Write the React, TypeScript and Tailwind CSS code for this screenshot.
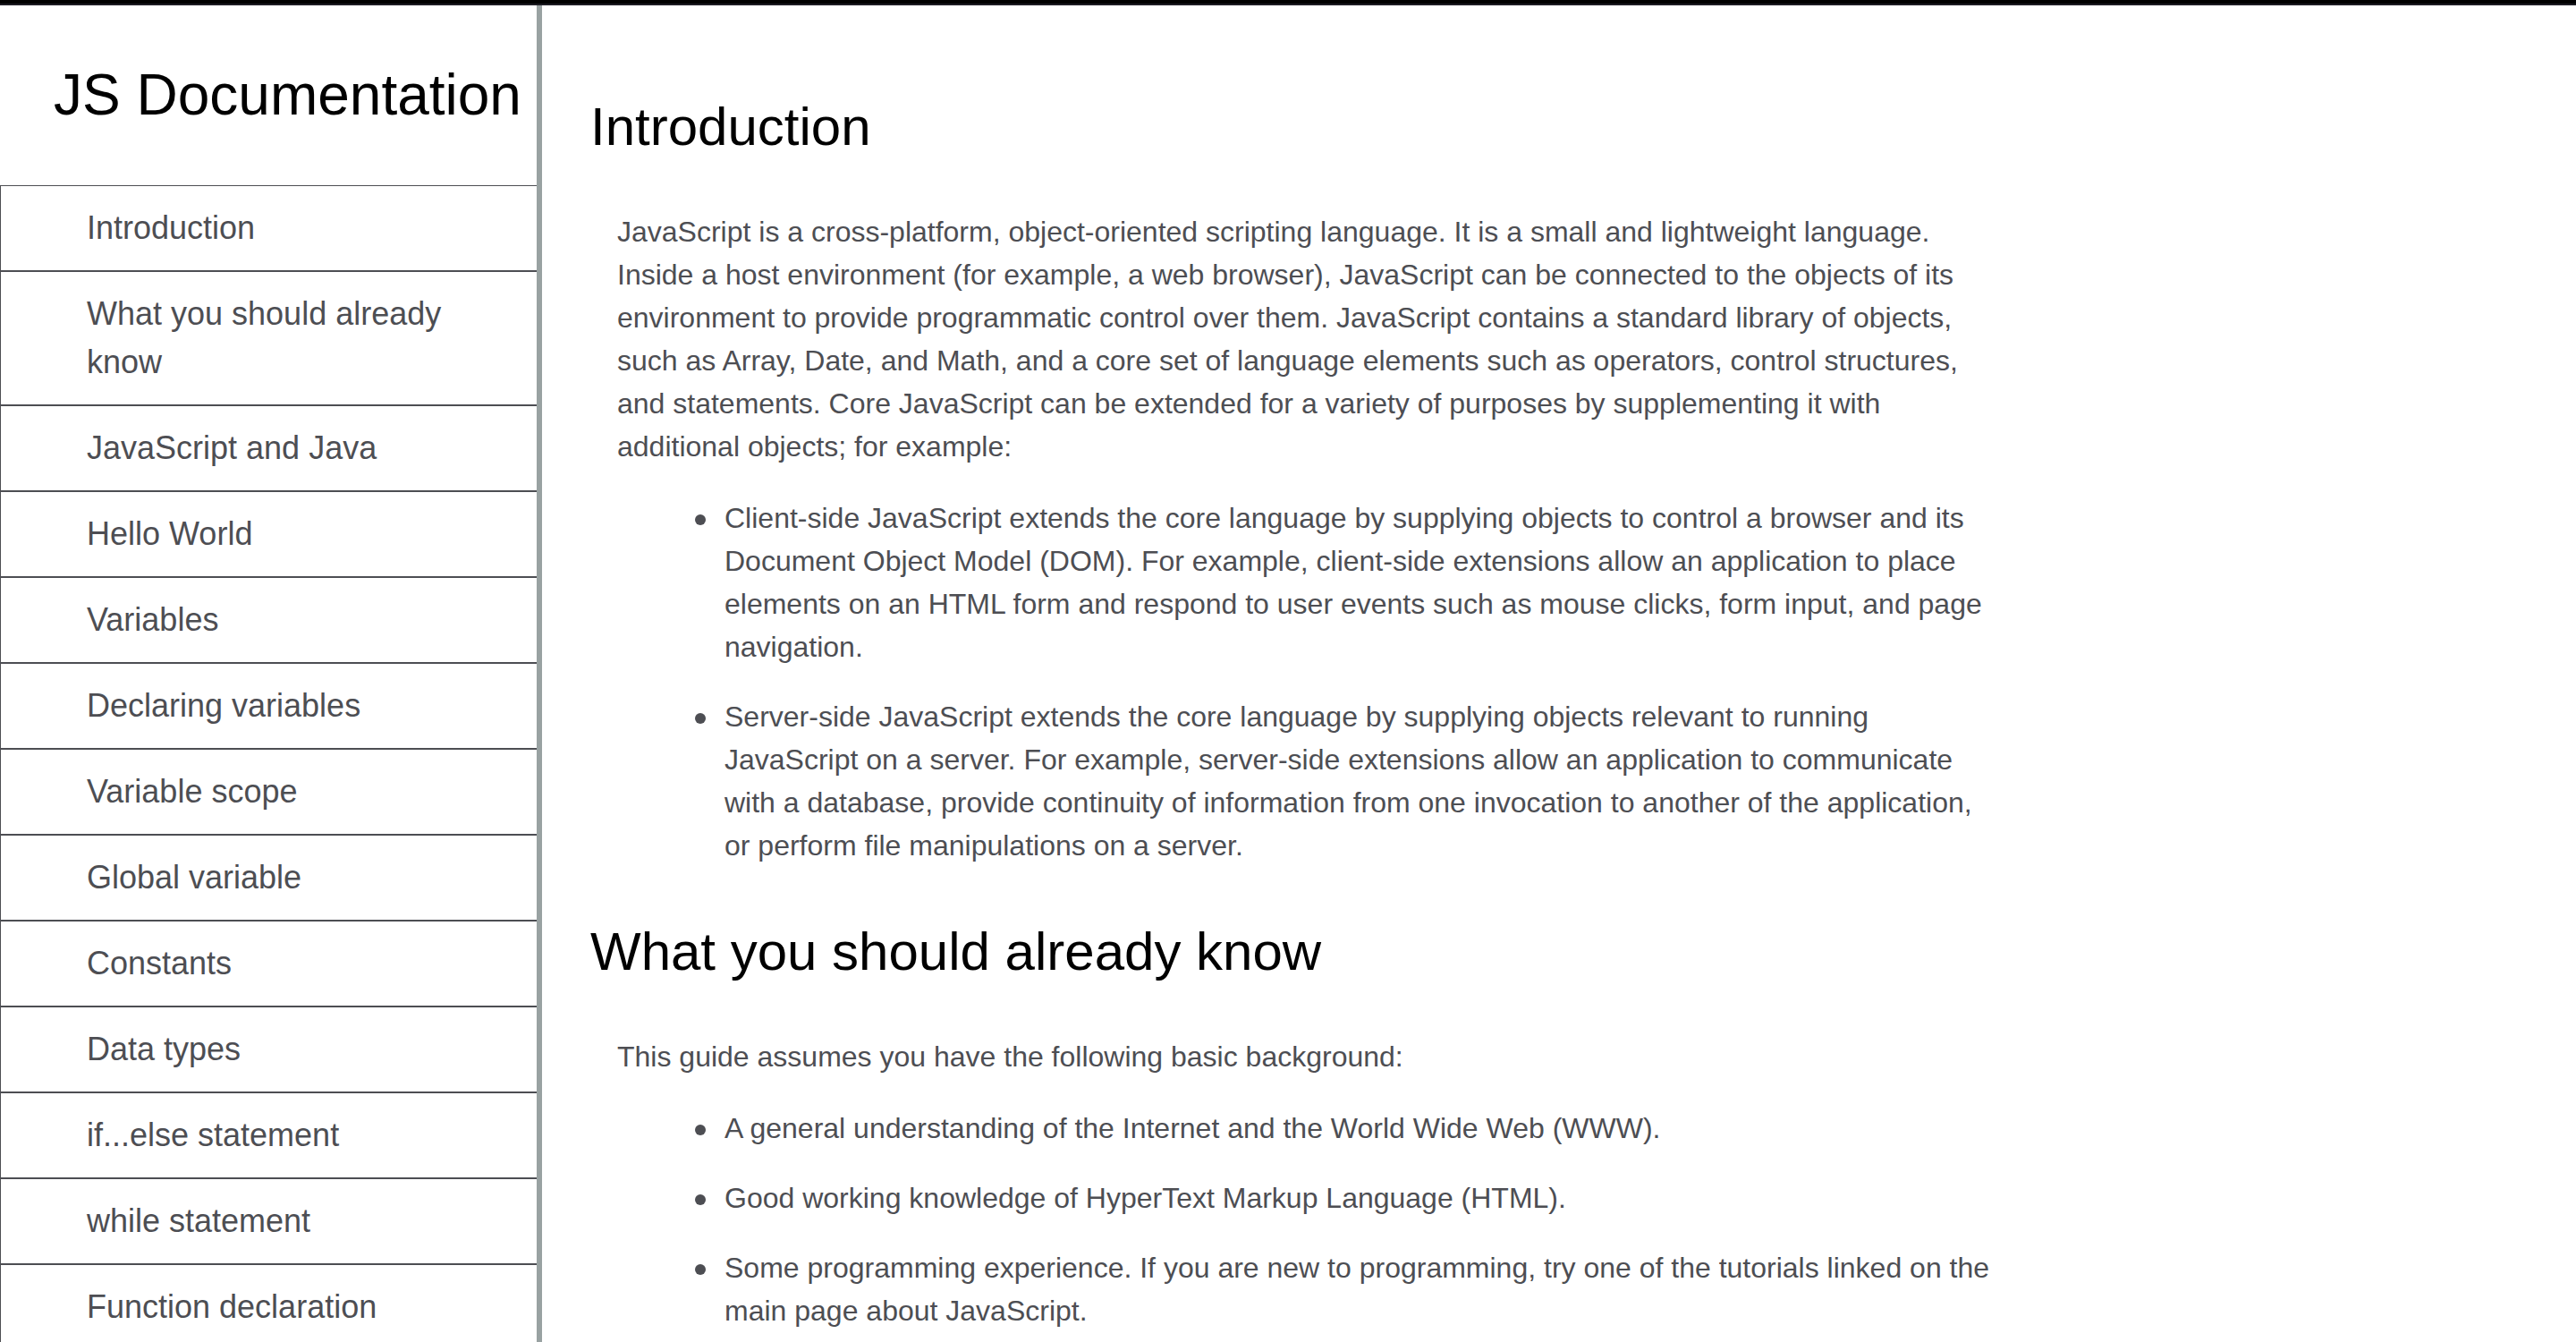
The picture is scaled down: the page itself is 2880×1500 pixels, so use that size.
type Section = {
  id: string;
  title: string;
  intro: string;
  points: string[];
};

const topics = [
  "Introduction",
  "What you should already know",
  "JavaScript and Java",
  "Hello World",
  "Variables",
  "Declaring variables",
  "Variable scope",
  "Global variable",
  "Constants",
  "Data types",
  "if...else statement",
  "while statement",
  "Function declaration",
];

const slug = (title: string) => title.replace(/\s+/g, "_");

const sections: Section[] = [
  {
    id: "Introduction",
    title: "Introduction",
    intro:
      "JavaScript is a cross-platform, object-oriented scripting language. It is a small and lightweight language. Inside a host environment (for example, a web browser), JavaScript can be connected to the objects of its environment to provide programmatic control over them. JavaScript contains a standard library of objects, such as Array, Date, and Math, and a core set of language elements such as operators, control structures, and statements. Core JavaScript can be extended for a variety of purposes by supplementing it with additional objects; for example:",
    points: [
      "Client-side JavaScript extends the core language by supplying objects to control a browser and its Document Object Model (DOM). For example, client-side extensions allow an application to place elements on an HTML form and respond to user events such as mouse clicks, form input, and page navigation.",
      "Server-side JavaScript extends the core language by supplying objects relevant to running JavaScript on a server. For example, server-side extensions allow an application to communicate with a database, provide continuity of information from one invocation to another of the application, or perform file manipulations on a server.",
    ],
  },
  {
    id: "What_you_should_already_know",
    title: "What you should already know",
    intro: "This guide assumes you have the following basic background:",
    points: [
      "A general understanding of the Internet and the World Wide Web (WWW).",
      "Good working knowledge of HyperText Markup Language (HTML).",
      "Some programming experience. If you are new to programming, try one of the tutorials linked on the main page about JavaScript.",
    ],
  },
];

function Sidebar() {
  return (
    <nav
      aria-label="JS Documentation"
      className="w-[606px] shrink-0 overflow-y-auto border-r-6 border-[#99a2a2] [scrollbar-width:none]"
    >
      <h1 className="pt-[52px] pb-[53px] pl-[60px] text-[64px] leading-[96px] text-black">JS Documentation</h1>
      <ul className="border-t border-l border-[#4d4e53]">
        {topics.map((topic) => (
          <li key={topic} className="border-b-2 border-[#4d4e53]">
            <a href={`#${slug(topic)}`} className="block py-5 pr-[60px] pl-24 text-[36px] leading-[54px]">
              {topic}
            </a>
          </li>
        ))}
      </ul>
    </nav>
  );
}

function DocSection({ id, title, intro, points }: Section) {
  return (
    <section id={id}>
      <h2 className="text-[60px] leading-[90px] text-black">{title}</h2>
      <div className="mt-12 max-w-[1600px] px-[30px] text-[32px] leading-[48px]">
        <p>{intro}</p>
        <ul className="mt-8 flex flex-col gap-[30px] pl-[87px]">
          {points.map((point) => (
            <li key={point} className="flex gap-[21px]">
              <span aria-hidden="true" className="mt-5 size-3 shrink-0 rounded-full bg-[#4d4e53]" />
              <span>{point}</span>
            </li>
          ))}
        </ul>
      </div>
    </section>
  );
}

export default function App() {
  return (
    <div className="flex h-screen flex-col bg-white font-['Liberation_Sans',Arial,sans-serif] text-[#4d4e53]">
      <div className="h-1.5 shrink-0 border-b-2 border-[#1c1b22] bg-black" />
      <div className="flex min-h-0 flex-1">
        <Sidebar />
        <main className="flex min-w-0 flex-1 flex-col gap-[50px] overflow-y-auto px-[54px] pt-[91px] [scrollbar-width:none]">
          {sections.map((section) => (
            <DocSection key={section.id} {...section} />
          ))}
        </main>
      </div>
    </div>
  );
}
